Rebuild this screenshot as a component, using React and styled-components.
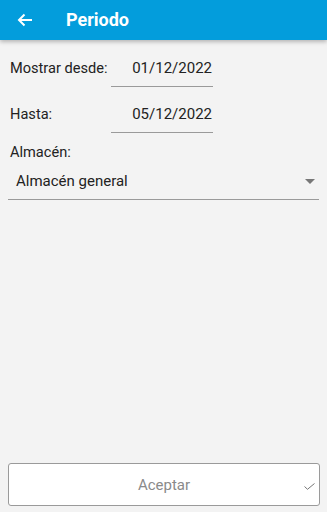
import React from 'react'
import styled, { createGlobalStyle } from 'styled-components'

const GlobalStyle = createGlobalStyle`
    html, body {
        margin: 0;
        padding: 0;
        background: #f3f3f3;
        font-family: Roboto, "Liberation Sans", sans-serif;
    }
`;

const Screen = styled.div`
    width: 327px;
    height: 512px;
    display: flex;
    flex-direction: column;
    background: #f3f3f3;
`;

const Toolbar = styled.div`
    height: 40px;
    background: #039ddc;
    display: flex;
    align-items: center;
    box-shadow: 0 2px 4px rgba(0, 0, 0, 0.25);
    position: relative;
    z-index: 1;
`;

const BackButton = styled.div`
    width: 66px;
    display: flex;
    align-items: center;
    padding-left: 17px;
    box-sizing: border-box;
`;

const Title = styled.h1`
    margin: 0;
    color: #fff;
    font-size: 18px;
    font-weight: 700;
    padding-bottom: 1px;
`;

const Content = styled.div`
    flex: 1;
    display: flex;
    flex-direction: column;
    padding: 0 8px;
`;

const DateRow = styled.div`
    display: flex;
    align-items: flex-start;
    height: ${p => p.$height}px;
    padding-top: ${p => p.$top}px;
`;

const Label = styled.div`
    width: 101px;
    padding-left: 2px;
    font-size: 14.6px;
    color: #222;
    line-height: 20px;
    padding-top: 2px;
`;

const DateField = styled.div`
    width: 102px;
    border-bottom: 1px solid #9a9a9a;
    font-size: 15px;
    color: #222;
    line-height: 20px;
    padding-top: 2px;
    box-sizing: border-box;
    height: 31px;
    text-align: right;
    padding-right: 1px;
`;

const SectionLabel = styled.div`
    padding-left: 2px;
    font-size: 14.6px;
    color: #222;
    line-height: 20px;
    margin-top: 2px;
`;

const Select = styled.div`
    display: flex;
    align-items: center;
    justify-content: space-between;
    height: 38px;
    border-bottom: 1px solid #9a9a9a;
    padding: 0 4px 0 8px;
    box-sizing: border-box;
    font-size: 15px;
    color: #222;
`;

const Caret = styled.div`
    width: 0;
    height: 0;
    border-left: 5px solid transparent;
    border-right: 5px solid transparent;
    border-top: 5px solid #777;
    margin-top: 2px;
`;

const Footer = styled.div`
    padding: 0 7px 6px 8px;
`;

const AcceptButton = styled.button`
    width: 100%;
    height: 43px;
    background: #fff;
    border: 1px solid #9a9a9a;
    border-radius: 3px;
    position: relative;
    font-family: Roboto, "Liberation Sans", sans-serif;
    font-size: 15px;
    color: #8a8a8a;
    display: flex;
    align-items: center;
    justify-content: center;
    padding: 0;
`;

const CheckMark = styled.svg`
    position: absolute;
    right: 4px;
    top: 19px;
`;

const App = () => {
  return (
    <Screen>
        <GlobalStyle />
        <Toolbar>
            <BackButton>
                <svg width="16" height="14" viewBox="0 0 16 14">
                    <path d="M15 7H2M7.5 1.5L2 7l5.5 5.5" stroke="#fff" strokeWidth="2" fill="none" />
                </svg>
            </BackButton>
            <Title>Periodo</Title>
        </Toolbar>
        <Content>
            <DateRow $top={16} $height={46}>
                <Label>Mostrar desde:</Label>
                <DateField>01/12/2022</DateField>
            </DateRow>
            <DateRow $top={0} $height={38}>
                <Label>Hasta:</Label>
                <DateField>05/12/2022</DateField>
            </DateRow>
            <SectionLabel>Almacén:</SectionLabel>
            <Select>
                <span>Almacén general</span>
                <Caret />
            </Select>
        </Content>
        <Footer>
            <AcceptButton>
                Aceptar
                <CheckMark width="11" height="7" viewBox="0 0 11 7">
                    <path d="M0.5 3.5L3.5 6.3L10.5 0.5" stroke="#777" strokeWidth="1" fill="none" />
                </CheckMark>
            </AcceptButton>
        </Footer>
    </Screen>
  )
}

export default App
